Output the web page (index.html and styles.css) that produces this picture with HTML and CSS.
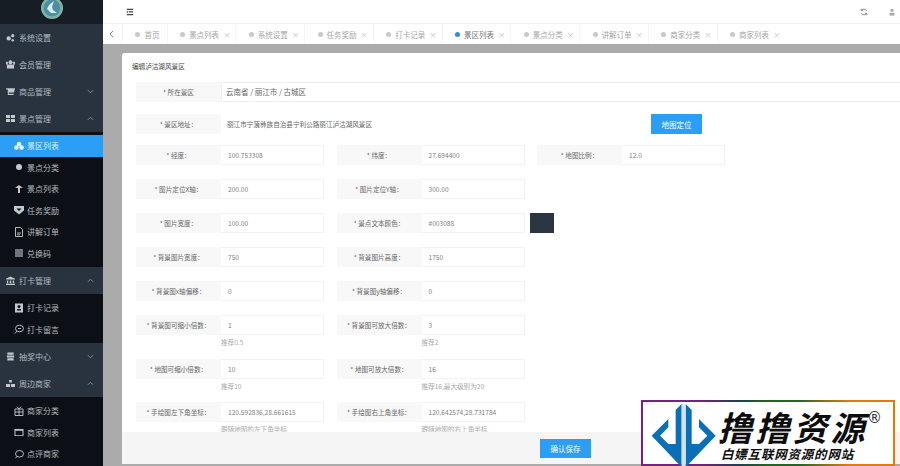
FILE: index.html
```html
<!DOCTYPE html>
<html lang="en">
<head>
  <meta charset="UTF-8" />
  <title>编辑泸沽湖风景区</title>
  <link rel="stylesheet" href="styles.css">
</head>
<body>
  <aside class="sidebar">
    <div class="logo">
      <svg width="24" height="24" viewBox="0 0 24 24">
        <circle cx="12" cy="8" r="11" fill="#7fb5a5"/>
        <circle cx="12" cy="8" r="8.500" fill="#4d8fa0"/>
        <path d="M14 1 9 5 7 9l4 4 6 0-4-3-1-3z" fill="#d7eef0"/>
      </svg>
    </div>
    <div class="menu-group">
      <svg class="ico" viewBox="0 0 10 10"><circle cx="3" cy="6" r="2.400"/><circle cx="7.500" cy="3" r="1.800"/><circle cx="7.500" cy="8" r="1.400"/></svg>
      <span>系统设置</span>
    </div>
    <div class="menu-group">
      <svg class="ico" viewBox="0 0 10 10"><circle cx="5" cy="2.600" r="2.200"/><path d="M1 5h8v4.500H1z"/><path d="M0 2h2v3H0zM8 2h2v3H8z"/></svg>
      <span>会员管理</span>
    </div>
    <div class="menu-group">
      <svg class="ico" viewBox="0 0 10 10"><path d="M0 1.500h10L9 6H3v1.500h5.500V9H2V3L0 2.500z"/></svg>
      <span>商品管理</span>
      <svg class="arrow" viewBox="0 0 8 5"><path d="M1 1l3 3 3-3"/></svg>
    </div>
    <div class="menu-group">
      <svg class="ico" viewBox="0 0 10 10"><path d="M0 1h4.500v3.500H0zM5.500 1H10v3.500H5.500zM0 5.500h4.500V9H0zM5.500 5.500H10V9H5.500z"/></svg>
      <span>景点管理</span>
      <svg class="arrow" viewBox="0 0 8 5"><path d="M1 4l3-3 3 3"/></svg>
    </div>
    <div class="submenu">
      <div class="menu-item active">
        <svg class="ico" viewBox="0 0 10 10"><circle cx="5" cy="3" r="2.300"/><circle cx="2.400" cy="6.600" r="2.300"/><circle cx="7.600" cy="6.600" r="2.300"/></svg>
        <span>景区列表</span>
      </div>
      <div class="menu-item">
        <svg class="ico" viewBox="0 0 10 10"><circle cx="5" cy="5" r="3"/></svg>
        <span>景点分类</span>
      </div>
      <div class="menu-item">
        <svg class="ico" viewBox="0 0 10 10"><path d="M5 1l4 3H6v5H4V4H1z"/></svg>
        <span>景点列表</span>
      </div>
      <div class="menu-item">
        <svg class="ico" viewBox="0 0 10 10"><path d="M0 1h10v4.500L5 9.500 0 5.500zM2.500 3.500 5 6l2.500-2.500z" fill-rule="evenodd"/></svg>
        <span>任务奖励</span>
      </div>
      <div class="menu-item">
        <svg class="ico line" viewBox="0 0 10 10"><path d="M1.500.5h5l2 2v7h-7zM3 6h4M3 7.800h3"/></svg>
        <span>讲解订单</span>
      </div>
      <div class="menu-item">
        <svg class="ico dim" viewBox="0 0 10 10"><path d="M1 1h8v8H1z"/></svg>
        <span>兑换码</span>
      </div>
    </div>
    <div class="menu-group">
      <svg class="ico" viewBox="0 0 10 10"><path d="M5 .5 10 3v1H0V3zM1 5h1.500v3H1zM4.200 5h1.600v3H4.200zM7.500 5H9v3H7.500zM0 8.500h10V10H0z"/></svg>
      <span>打卡管理</span>
      <svg class="arrow" viewBox="0 0 8 5"><path d="M1 4l3-3 3 3"/></svg>
    </div>
    <div class="submenu">
      <div class="menu-item">
        <svg class="ico" viewBox="0 0 10 10"><path d="M1 .5h8v9H1zM5 2a1.500 1.500 0 100 3 1.500 1.500 0 000-3zM3 6v1.500h4V6z" fill-rule="evenodd"/></svg>
        <span>打卡记录</span>
      </div>
      <div class="menu-item">
        <svg class="ico line" viewBox="0 0 10 10"><ellipse cx="5.500" cy="4.500" rx="4" ry="3.300"/><path d="M3 7 1 9.500M4 4.500h3"/></svg>
        <span>打卡留言</span>
      </div>
    </div>
    <div class="menu-group">
      <svg class="ico" viewBox="0 0 10 10"><path d="M1.500.5h7v2.500h-7zM1 3.800h8v2.400H1zM1.500 7h7v2.500h-7z"/></svg>
      <span>抽奖中心</span>
      <svg class="arrow" viewBox="0 0 8 5"><path d="M1 1l3 3 3-3"/></svg>
    </div>
    <div class="menu-group">
      <svg class="ico" viewBox="0 0 10 10"><path d="M3.500 1h3v3h-3zM0 5.500h4.500V9H0zM5.500 5.500H10V9H5.500z"/></svg>
      <span>周边商家</span>
      <svg class="arrow" viewBox="0 0 8 5"><path d="M1 4l3-3 3 3"/></svg>
    </div>
    <div class="submenu">
      <div class="menu-item">
        <svg class="ico line" viewBox="0 0 10 10"><path d="M1 3h8v6.500H1zM5 3v6.500M1 6h8M3 .7 5 3l2-2.300"/></svg>
        <span>商家分类</span>
      </div>
      <div class="menu-item">
        <svg class="ico" viewBox="0 0 10 10"><path d="M.5 2h9v1.800h-9zM.5 3.800h1v4.400h7V3.800h1V9h-9z"/></svg>
        <span>商家列表</span>
      </div>
      <div class="menu-item">
        <svg class="ico line" viewBox="0 0 10 10"><ellipse cx="5.500" cy="4.800" rx="4" ry="3.300"/><path d="M3 7.400 1.500 9.200"/></svg>
        <span>点评商家</span>
      </div>
    </div>
  </aside>

  <main class="main">
    <header class="topbar">
      <svg class="top-ico menu-btn" viewBox="0 0 10 10"><path d="M1 1h8v1.500H1zM3.500 4.200H9v1.500H3.500zM1 7.500h8V9H1zM1 3.500 3 5 1 6.500z"/></svg>
      <svg class="top-ico refresh" viewBox="0 0 10 10"><path d="M8.500 3.500A4 4 0 001.800 3M1.500 6.500A4 4 0 008.200 7M1.500 1v2.300h2.300M8.500 9V6.700H6.200"/></svg>
      <svg class="top-ico user" viewBox="0 0 10 10"><circle cx="5" cy="2.800" r="2"/><path d="M2 6h6v3.500H2z"/></svg>
    </header>

    <nav class="tabs">
      <svg class="tab-back" viewBox="0 0 6 10"><path d="M5 1 1 5l4 4"/></svg>
      <div class="tab"><i class="dot"></i><span>首页</span></div>
      <div class="tab"><i class="dot"></i><span>景点列表</span><b class="close">×</b></div>
      <div class="tab"><i class="dot"></i><span>系统设置</span><b class="close">×</b></div>
      <div class="tab"><i class="dot"></i><span>任务奖励</span><b class="close">×</b></div>
      <div class="tab"><i class="dot"></i><span>打卡记录</span><b class="close">×</b></div>
      <div class="tab current"><i class="dot"></i><span>景区列表</span><b class="close">×</b></div>
      <div class="tab"><i class="dot"></i><span>景点分类</span><b class="close">×</b></div>
      <div class="tab"><i class="dot"></i><span>讲解订单</span><b class="close">×</b></div>
      <div class="tab"><i class="dot"></i><span>商家分类</span><b class="close">×</b></div>
      <div class="tab"><i class="dot"></i><span>商家列表</span><b class="close">×</b></div>
    </nav>

    <section class="content">
      <div class="modal">
        <div class="modal-title">编辑泸沽湖风景区</div>
        <div class="modal-body">
          <div class="row-wide region">
            <label class="field-label">* 所在景区</label>
            <div class="region-value">云南省 / 丽江市 / 古城区</div>
          </div>
          <div class="row-wide address">
            <label class="field-label">* 景区地址：</label>
            <div class="address-value">丽江市宁蒗彝族自治县宁利公路丽江泸沽湖风景区</div>
            <button class="btn map-btn">地图定位</button>
          </div>
          <div class="grid">
            <div class="field"><label class="field-label">* 经度：</label><div class="field-input">100.753308</div></div>
            <div class="field"><label class="field-label">* 纬度：</label><div class="field-input">27.694400</div></div>
            <div class="field"><label class="field-label">* 地图比例：</label><div class="field-input">12.0</div></div>

            <div class="field"><label class="field-label">* 图片定位X轴：</label><div class="field-input">200.00</div></div>
            <div class="field"><label class="field-label">* 图片定位Y轴：</label><div class="field-input">300.00</div></div>
            <div></div>

            <div class="field"><label class="field-label">* 图片宽度：</label><div class="field-input">100.00</div></div>
            <div class="field"><label class="field-label">* 景点文本颜色：</label><div class="field-input">#003088</div><div class="swatch"></div></div>
            <div></div>

            <div class="field"><label class="field-label">* 背景图片宽度：</label><div class="field-input">750</div></div>
            <div class="field"><label class="field-label">* 背景图片高度：</label><div class="field-input">1750</div></div>
            <div></div>

            <div class="field"><label class="field-label">* 背景图x轴偏移：</label><div class="field-input">0</div></div>
            <div class="field"><label class="field-label">* 背景图y轴偏移：</label><div class="field-input">0</div></div>
            <div></div>

            <div>
              <div class="field"><label class="field-label">* 背景图可缩小倍数：</label><div class="field-input">1</div></div>
              <div class="note">推荐0.5</div>
            </div>
            <div>
              <div class="field"><label class="field-label">* 背景图可放大倍数：</label><div class="field-input">3</div></div>
              <div class="note">推荐2</div>
            </div>
            <div></div>

            <div>
              <div class="field"><label class="field-label">* 地图可缩小倍数：</label><div class="field-input">10</div></div>
              <div class="note">推荐10</div>
            </div>
            <div>
              <div class="field"><label class="field-label">* 地图可放大倍数：</label><div class="field-input">16</div></div>
              <div class="note">推荐16,最大级别为20</div>
            </div>
            <div></div>

            <div>
              <div class="field"><label class="field-label">* 手绘图左下角坐标：</label><div class="field-input">120.592836,28.661615</div></div>
              <div class="note">跟随地图的左下角坐标</div>
            </div>
            <div>
              <div class="field"><label class="field-label">* 手绘图右上角坐标：</label><div class="field-input">120.642574,28.731784</div></div>
              <div class="note">跟随地图的右上角坐标</div>
            </div>
          </div>
        </div>
        <div class="modal-footer">
          <button class="btn save-btn">确认保存</button>
        </div>
      </div>
    </section>
  </main>

  <div class="watermark">
    <svg class="wm-logo" viewBox="0 0 270 204">
      <path d="M125 12V202L35 107 85 57V82L60 107 85 132H107V30z" fill="#0b6fb8"/>
      <path d="M137 12V202L227 107 177 57V82L202 107 177 132H155V30z" fill="#0b6fb8"/>
      <path d="M125 12h12v190h-12z" fill="#cfe4f3"/>
    </svg>
    <div class="wm-text">
      <div class="wm-name">撸撸资源<span class="wm-reg">®</span></div>
      <div class="wm-sub">白嫖互联网资源的网站</div>
    </div>
  </div>
</body>
</html>
```

FILE: styles.css
```css
* {
  box-sizing: border-box;
}
body {
  margin: 0;
  height: 100vh;
  display: flex;
  overflow: hidden;
  background: #fff;
  font-family: "Noto Sans CJK SC", "Noto Sans", sans-serif;
}

/* sidebar */
.sidebar {
  width: 103px;
  flex: none;
  background: #0c1016;
  color: #b4b9be;
  font-size: 8px;
}
.logo {
  height: 24px;
  background: #171d24;
  display: flex;
  justify-content: center;
}
.menu-group {
  height: 27px;
  background: #28333f;
  display: flex;
  align-items: center;
  gap: 4px;
  padding: 0 9px 0 6px;
}
.menu-group .arrow {
  margin-left: auto;
  width: 7px;
  height: 5px;
  fill: none;
  stroke: #8d949b;
  stroke-width: 1;
}
.ico {
  width: 9px;
  height: 9px;
  flex: none;
  fill: #c4c8cc;
}
.ico.line {
  fill: none;
  stroke: #b4b9be;
  stroke-width: 1;
}
.ico.dim {
  fill: #6f747a;
}
.submenu {
  padding: 3px 0;
}
.menu-item {
  height: 21.5px;
  display: flex;
  align-items: center;
  gap: 3px;
  padding-left: 14px;
}
.menu-item .ico {
  width: 10px;
  height: 10px;
}
.menu-item.active {
  background: #2b9ff6;
  color: #dff0fd;
}
.menu-item.active .ico {
  fill: #e8f4fe;
}

/* top area */
.main {
  flex: 1;
  min-width: 0;
  display: flex;
  flex-direction: column;
}
.topbar {
  height: 24px;
  flex: none;
  display: flex;
  align-items: center;
  padding: 0 4px 0 23px;
  border-bottom: 1px solid #f2f2f2;
}
.top-ico {
  width: 8px;
  height: 8px;
}
.menu-btn {
  fill: #444;
}
.refresh {
  margin-left: auto;
  fill: none;
  stroke: #777;
  stroke-width: 1;
}
.user {
  margin-left: 20px;
  fill: #aaa;
}
.tabs {
  height: 20px;
  flex: none;
  display: flex;
  align-items: center;
  padding-left: 6px;
  font-size: 7.5px;
  color: #a6a6a6;
  white-space: nowrap;
}
.tab-back {
  width: 5px;
  height: 8px;
  margin-right: 8px;
  fill: none;
  stroke: #555;
  stroke-width: 1;
  flex: none;
}
.tab {
  height: 20px;
  display: flex;
  align-items: center;
  padding: 0 7.35px 0 13.4px;
  box-shadow: inset 1px 0 0 #f6f6f6;
}
.dot {
  width: 5px;
  height: 5px;
  margin-right: 4px;
  border-radius: 50%;
  background: #c9c9c9;
}
.close {
  width: 5px;
  margin-left: 4px;
  font-weight: 400;
  color: #c4c4c4;
}
.tab.current {
  color: #777;
}
.tab.current .dot {
  background: #2b8fe6;
}

/* dialog */
.content {
  flex: 1;
  min-height: 0;
  overflow: hidden;
  background: #ababab;
  padding: 9px 0 2px 19px;
}
.modal {
  width: 887px;
  height: 100%;
  background: #fff;
  border-radius: 3px;
  display: flex;
  flex-direction: column;
}
.modal-title {
  height: 29px;
  flex: none;
  padding: 9px 0 0 10px;
  font-size: 6.6px;
  line-height: 9px;
  color: #444;
}
.modal-body {
  flex: 1;
  min-height: 0;
  padding-left: 14px;
  font-size: 6.6px;
  color: #808080;
}
.modal-footer {
  height: 32px;
  flex: none;
  background: #f5f5f5;
  display: flex;
  align-items: center;
  justify-content: center;
}
.row-wide {
  display: flex;
  height: 20px;
  align-items: center;
}
.region {
  margin-bottom: 12px;
}
.address {
  margin-bottom: 11px;
}
.field-label {
  width: 85px;
  height: 20px;
  flex: none;
  background: #f8f8f8;
  color: #666;
  text-align: center;
  line-height: 20px;
}
.region-value {
  flex: 1;
  height: 20px;
  line-height: 18px;
  padding-left: 4px;
  border: 1px solid #f0f0f0;
  color: #666;
  font-size: 7.5px;
}
.address-value {
  width: 430px;
  padding-left: 6px;
  color: #666;
}
.btn {
  border: none;
  padding: 0;
  background: #2b9ff6;
  color: #fff;
  font-family: inherit;
  font-size: 7.5px;
}
.map-btn {
  width: 51px;
  height: 20px;
}
.save-btn {
  width: 51px;
  height: 19px;
}
.grid {
  display: grid;
  grid-template-columns: repeat(3, 188px);
  column-gap: 12.5px;
  row-gap: 14px;
}
.field {
  display: flex;
  height: 20px;
}
.field-input {
  width: 103px;
  height: 20px;
  flex: none;
  line-height: 18px;
  padding-left: 7px;
  border: 1px solid #f2f2f2;
  border-left: none;
}
.swatch {
  width: 24px;
  height: 20px;
  flex: none;
  margin-left: 5px;
  background: #2a3542;
}
.note {
  height: 9.5px;
  padding-top: 4px;
  line-height: 7px;
  margin-left: 85px;
  color: #aaa;
  white-space: nowrap;
}

/* watermark, sits over the page corner */
.watermark {
  position: absolute;
  left: 641px;
  top: 400px;
  width: 254px;
  height: 66px;
  display: flex;
  background: #fff;
  border: 2px solid;
  border-image: linear-gradient(90deg, #7b1f86 0%, #7b1f86 22%, #1f3f4f 38%, #1c6a1c 50%, #1c6a1c 62%, #e87a00 82%) 1;
}
.wm-logo {
  width: 90px;
  height: 68px;
  margin: -2px 0 0 -3px;
  flex: none;
}
.wm-text {
  margin-left: -12px;
  color: #0d0d0d;
  font-style: italic;
  font-weight: 700;
  white-space: nowrap;
}
.wm-name {
  position: relative;
  font-size: 34px;
  line-height: 32px;
  letter-spacing: 3.5px;
  margin-top: 9px;
}
.wm-reg {
  position: absolute;
  left: 149px;
  top: 0;
  font-family: "DejaVu Sans", sans-serif;
  font-size: 15px;
  line-height: 15px;
  letter-spacing: 0;
  font-style: normal;
  font-weight: 400;
  color: #333;
}
.wm-sub {
  font-size: 12.5px;
  line-height: 13px;
  letter-spacing: 0.8px;
  margin: 4px 0 0 3px;
}
```
